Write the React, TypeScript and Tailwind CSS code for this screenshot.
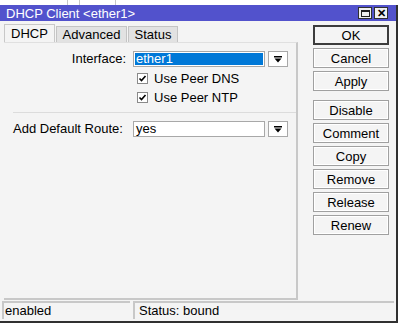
const font = { fontFamily: '"Liberation Sans", Arial, sans-serif' }

function WinButton({ label, primary = false }: { label: string; primary?: boolean }) {
  return (
    <button
      className={
        'h-[20px] w-[76px] bg-[#f4f4f4] text-[13px] leading-none text-black ' +
        (primary ? 'border-2 border-[#3c3c3c]' : 'border border-[#a0a0a0] shadow-[inset_0_0_0_1px_#ffffff]')
      }
    >
      {label}
    </button>
  )
}

function DropButton() {
  return (
    <div className="ml-[3px] flex h-[16px] w-[20px] items-center justify-center border border-[#a8a8a8] bg-white">
      <svg width="8" height="7" viewBox="0 0 8 7">
        <rect x="0" y="0" width="8" height="1.5" fill="#000" />
        <path d="M0.5 2.5 H7.5 L4 6.5 Z" fill="#000" />
      </svg>
    </div>
  )
}

function CheckRow({ label }: { label: string }) {
  return (
    <div className="flex h-[19px] items-center pl-[133px]">
      <div className="flex h-[11px] w-[11px] items-center justify-center border border-[#8a8a8a] bg-white">
        <svg width="9" height="9" viewBox="0 0 9 9">
          <path d="M1.5 4.5 L3.5 6.5 L7.5 2" stroke="#000" strokeWidth="1.6" fill="none" />
        </svg>
      </div>
      <span className="ml-[6px] text-[13px] text-black">{label}</span>
    </div>
  )
}

export default function App() {
  return (
    <div className="h-[326px] w-[400px] overflow-hidden bg-white" style={font}>
      {/* strip of desktop above the window */}
      <div className="flex h-[5px] w-full">
        <div className="w-[68px] border-r border-[#c8c8c8]" />
        <div className="w-[12px] border-r border-[#c8c8c8]" />
        <div className="w-[36px] border-r border-[#c8c8c8]" />
      </div>

      <div className="flex h-[318px] w-[398px] flex-col border-r-2 border-b-2 border-[#303030] bg-[#f4f4f4]">
        {/* title bar */}
        <div className="flex h-[16px] items-center justify-between bg-[#5252cc] pl-[6px] pr-[8px]">
          <span className="text-[13px] leading-none text-white">DHCP Client &lt;ether1&gt;</span>
          <div className="flex gap-[2px]">
            <div className="flex h-[12px] w-[14px] items-center justify-center border border-[#303030] bg-[#f0f0f0]">
              <div className="h-[7px] w-[9px] border border-t-2 border-[#202020]" />
            </div>
            <div className="flex h-[12px] w-[14px] items-center justify-center border border-[#303030] bg-[#f0f0f0] text-[11px] font-bold leading-none text-black">
              ✕
            </div>
          </div>
        </div>

        <div className="flex flex-1">
          {/* left side: tabs + panel */}
          <div className="flex w-[298px] flex-col pl-[4px] pt-[3px]">
            <div className="flex h-[18px] items-end text-[13px] text-black">
              <div className="flex h-[18px] w-[51px] items-center justify-center border border-b-0 border-[#c8c8c8] bg-[#f4f4f4]">
                DHCP
              </div>
              <div className="ml-[1px] flex h-[16px] w-[71px] items-center justify-center border border-b-0 border-[#c4c4c4] bg-[#e2e2e2]">
                Advanced
              </div>
              <div className="ml-[1px] flex h-[16px] w-[50px] items-center justify-center border border-b-0 border-[#c4c4c4] bg-[#e2e2e2]">
                Status
              </div>
            </div>
            <div className="flex h-[258px] flex-col border-r-2 border-b-2 border-t border-[#c8c8c8] border-t-[#e0e0e0] pt-[8px]">
              <div className="flex h-[16px] items-center">
                <span className="w-[122px] text-right text-[13px] text-black">Interface:</span>
                <div className="ml-[7px] flex h-[16px] w-[132px] items-center border border-[#a8a8a8] bg-white p-[1px]">
                  <div className="flex h-full w-full items-center bg-[#0078d7] pl-[1px] text-[13px] text-white">ether1</div>
                </div>
                <DropButton />
              </div>
              <div className="mt-[2px]">
                <CheckRow label="Use Peer DNS" />
                <CheckRow label="Use Peer NTP" />
              </div>
              <div className="ml-[9px] mt-[5px] h-px bg-[#dcdcdc]" />
              <div className="mt-[8px] flex h-[16px] items-center">
                <span className="w-[122px] pl-[9px] text-[13px] text-black">Add Default Route:</span>
                <div className="ml-[7px] flex h-[16px] w-[132px] items-center border border-[#a8a8a8] bg-white pl-[2px] text-[13px] text-black">
                  yes
                </div>
                <DropButton />
              </div>
            </div>
          </div>

          {/* right side: buttons */}
          <div className="ml-[15px] flex flex-col pt-[4px]">
            <div className="flex flex-col gap-[3px]">
              <WinButton label="OK" primary />
              <WinButton label="Cancel" />
              <WinButton label="Apply" />
            </div>
            <div className="mt-[9px] flex flex-col gap-[3px]">
              <WinButton label="Disable" />
              <WinButton label="Comment" />
              <WinButton label="Copy" />
              <WinButton label="Remove" />
              <WinButton label="Release" />
              <WinButton label="Renew" />
            </div>
          </div>
        </div>

        {/* status bar */}
        <div className="flex h-[20px] gap-[3px] px-[2px] pb-[2px] text-[13px] text-black">
          <div className="flex w-[128px] items-center border-l-2 border-t-2 border-[#c8c8c8] pl-[1px]">enabled</div>
          <div className="flex flex-1 items-center border-l-2 border-t-2 border-[#c8c8c8] pl-[4px]">Status: bound</div>
        </div>
      </div>
    </div>
  )
}
